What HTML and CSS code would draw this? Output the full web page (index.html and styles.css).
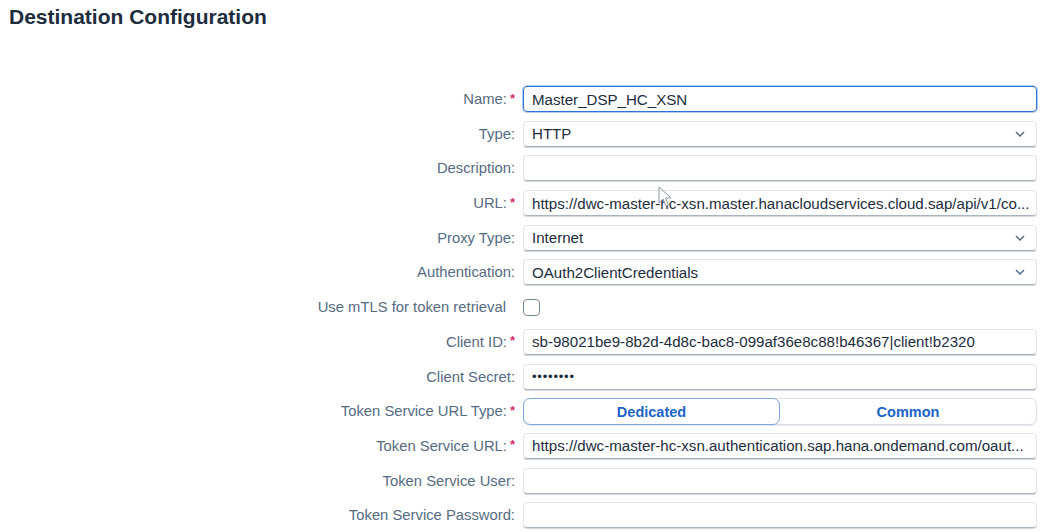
FILE: index.html
```html
<!DOCTYPE html>
<html>
<head>
<meta charset="utf-8">
<link rel="stylesheet" href="styles.css">
</head>
<body>
<div class="page">
  <h1 class="title">Destination Configuration</h1>
  <div class="form">
    <label class="lbl">Name:<span class="req">*</span></label>
    <div class="field focused">Master_DSP_HC_XSN</div>

    <label class="lbl">Type:</label>
    <div class="field select">HTTP<svg class="chev" width="10" height="6" viewBox="0 0 10 6"><path d="M1 1l4 4 4-4" fill="none" stroke="#556b82" stroke-width="1.5"/></svg></div>

    <label class="lbl">Description:</label>
    <div class="field"></div>

    <label class="lbl">URL:<span class="req">*</span></label>
    <div class="field url">https://dwc-master-hc-xsn.master.hanacloudservices.cloud.sap/api/v1/co...
      <svg class="cursor" width="14" height="21" viewBox="0 0 14 21"><path d="M1 1v16l4-4 3 7 2.5-1-3-7h5.5z" fill="#fff" stroke="#8a96a3" stroke-width="1"/></svg>
    </div>

    <label class="lbl">Proxy Type:</label>
    <div class="field select">Internet<svg class="chev" width="10" height="6" viewBox="0 0 10 6"><path d="M1 1l4 4 4-4" fill="none" stroke="#556b82" stroke-width="1.5"/></svg></div>

    <label class="lbl">Authentication:</label>
    <div class="field select">OAuth2ClientCredentials<svg class="chev" width="10" height="6" viewBox="0 0 10 6"><path d="M1 1l4 4 4-4" fill="none" stroke="#556b82" stroke-width="1.5"/></svg></div>

    <label class="lbl lbl-cb">Use mTLS for token retrieval</label>
    <div class="cbcell"><span class="checkbox"></span></div>

    <label class="lbl">Client ID:<span class="req">*</span></label>
    <div class="field">sb-98021be9-8b2d-4d8c-bac8-099af36e8c88!b46367|client!b2320</div>

    <label class="lbl">Client Secret:</label>
    <div class="field pw">••••••••</div>

    <label class="lbl">Token Service URL Type:<span class="req">*</span></label>
    <div class="segmented">
      <div class="seg selected">Dedicated</div>
      <div class="seg">Common</div>
    </div>

    <label class="lbl">Token Service URL:<span class="req">*</span></label>
    <div class="field">https://dwc-master-hc-xsn.authentication.sap.hana.ondemand.com/oaut...</div>

    <label class="lbl">Token Service User:</label>
    <div class="field"></div>

    <label class="lbl">Token Service Password:</label>
    <div class="field"></div>
  </div>
</div>
</body>
</html>
```

FILE: styles.css
```css
html, body {
  margin: 0;
  padding: 0;
  background: #ffffff;
}
body {
  font-family: "Liberation Sans", Arial, sans-serif;
  width: 1050px;
  height: 532px;
  overflow: hidden;
}
.page {
  padding: 5px 0 0 9px;
}
.title {
  margin: 0;
  font-size: 21px;
  font-weight: bold;
  color: #1d2d3e;
  line-height: 24px;
}
.form {
  margin-top: 57px;
  display: grid;
  grid-template-columns: 506px 514px;
  column-gap: 8px;
  row-gap: 8.7px;
  grid-auto-rows: 26px;
}
.lbl {
  display: flex;
  align-items: center;
  justify-content: flex-end;
  font-size: 14.8px;
  color: #556b82;
  white-space: nowrap;
}
.lbl-cb {
  padding-right: 9px;
}
.req {
  color: #d8306b;
  margin-left: 3px;
  font-weight: bold;
  font-size: 13px;
  position: relative;
  top: -1px;
}
.field {
  position: relative;
  box-sizing: border-box;
  height: 26px;
  border: 1px solid #e1e5e9;
  border-bottom-color: #a9b4bf;
  box-shadow: 0 1px 0 #d3d9df;
  border-radius: 4px;
  padding: 0 8px;
  display: flex;
  align-items: center;
  font-size: 15.1px;
  color: #1d2d3e;
  white-space: nowrap;
  overflow: visible;
}
.field.focused {
  border: 1px solid #2b73d8;
  box-shadow: 0 0 0 1px rgba(43, 115, 216, 0.35);
}
.field.select {
  justify-content: space-between;
}
.chev {
  margin-right: 3px;
}
.field.pw {
  letter-spacing: 0.8px;
  font-size: 13px;
}
.cursor {
  position: absolute;
  left: 134px;
  top: -5px;
}
.cbcell {
  display: flex;
  align-items: center;
}
.checkbox {
  width: 15px;
  height: 15px;
  border: 1px solid #7d8a97;
  border-radius: 4px;
  background: #fff;
}
.segmented {
  display: grid;
  grid-template-columns: 256px 1fr;
  box-sizing: border-box;
  height: 27px;
  border: 1px solid #dce1e5;
  border-radius: 7px;
  box-shadow: 0 1px 0 #e6eaee;
}
.seg {
  display: flex;
  align-items: center;
  justify-content: center;
  font-size: 14.5px;
  font-weight: bold;
  color: #1a64c8;
}
.seg.selected {
  margin: -1px 0 -1px -1px;
  border: 1px solid #7ea6dc;
  border-radius: 7px;
  background: #fff;
}
```
